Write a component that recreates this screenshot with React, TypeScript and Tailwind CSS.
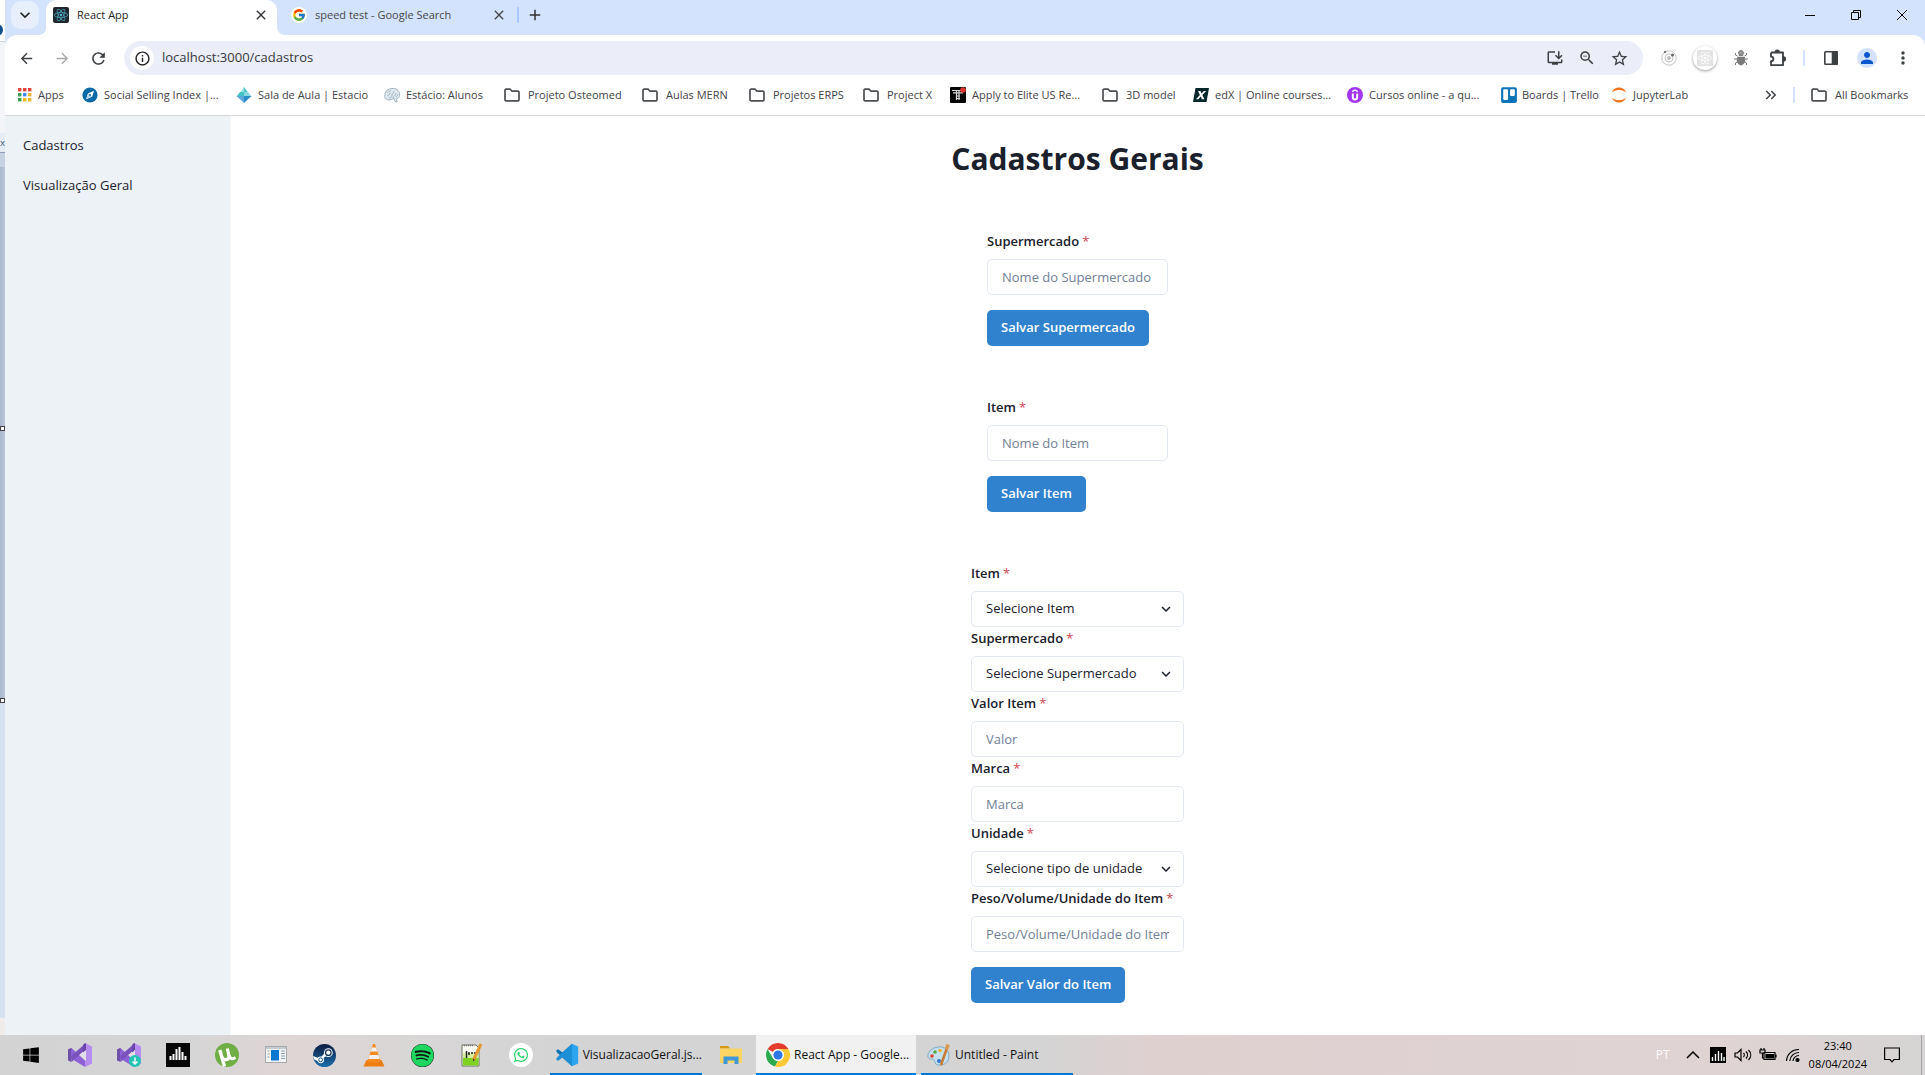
import React from "react";
import {
  MdArrowBack, MdArrowForward, MdRefresh, MdInfoOutline, MdStarBorder, MdZoomOut, MdOutlineInstallDesktop,
  MdMoreVert, MdKeyboardDoubleArrowRight, MdPerson, MdClose, MdAdd, MdKeyboardArrowDown,
} from "react-icons/md";
import { FcGoogle } from "react-icons/fc";
import { FaReact, FaWindows, FaSpotify, FaTrello, FaWhatsapp } from "react-icons/fa";

function FolderIcon() {
  return (
    <svg viewBox="0 0 16 14" className="h-3.5 w-4 shrink-0" fill="none" stroke="#4c4f52" strokeWidth="1.7" strokeLinejoin="round">
      <path d="M1 2.2a1 1 0 0 1 1-1h4.2l1.8 2h6a1 1 0 0 1 1 1v7.600a1 1 0 0 1-1 1H2a1 1 0 0 1-1-1z" />
    </svg>
  );
}

function AppsIcon() {
  const colors = ["#e0443a", "#e0443a", "#e0443a", "#34a04c", "#4285f4", "#f0b428", "#34a04c", "#f0b428", "#f0b428"];
  return (
    <svg viewBox="0 0 14 14" className="size-3.5 shrink-0">
      {colors.map((c, i) => (
        <rect key={i} x={(i % 3) * 5} y={Math.floor(i / 3) * 5} width="3.4" height="3.4" fill={c} />
      ))}
    </svg>
  );
}

function CompassIcon() {
  return (
    <svg viewBox="0 0 16 16" className="size-4 shrink-0">
      <circle cx="8" cy="8" r="7.600" fill="#0a6aa8" />
      <path d="M12 3.800 10.200 9.500 4.200 12.300 6 6.500z" fill="#fff" />
      <path d="M10.200 9.500 4.200 12.300 6 6.500z" fill="#b9d9ee" />
      <circle cx="8" cy="8" r="1" fill="#0a6aa8" />
    </svg>
  );
}

function DiamondIcon() {
  return (
    <svg viewBox="0 0 16 16" className="size-4 shrink-0">
      <path d="M8 0 4 5.500h4z" fill="#9be3e0" />
      <path d="M8 0l4 5.500H8z" fill="#4cc3cc" />
      <path d="M4 5h4v4.500H.5z" fill="#45c4c6" />
      <path d="M12 5H8v4.500h7.500z" fill="#8ad8e0" />
      <path d="M.5 9H8v7z" fill="#5ba9da" />
      <path d="M15.500 9H8v7z" fill="#2b8cc9" />
    </svg>
  );
}

function BrainIcon() {
  return (
    <svg viewBox="0 0 16 16" className="size-4 shrink-0" fill="none" stroke="#9fb4c4" strokeWidth="1">
      <path d="M5 13C1 13 0 10 1 7.500 1 4 4 2 8 1.500c4-.5 7 2 7.500 5 .5 3-1 5-3 5.500l.5 3-2-.5-1-3C8 12 7 13 5 13z" fill="#dfe9ef" />
      <path d="M3 9c1-1 3-1 3-3M5 11c2 0 3-1 3-3 0-2 2-2 2-4M9 11c0-2 3-2 3-5M3 6c1-1 2-2 4-2M12 10c1-1 2-2 2-3" />
    </svg>
  );
}

function TuringIcon() {
  return (
    <svg viewBox="0 0 16 16" className="size-4 shrink-0">
      <rect width="16" height="16" rx="1" fill="#050505" />
      <path d="M2 3.500h9M3 5.800h10M6.500 3v10M9 3v10M6 9h4M6 11.500h4" stroke="#d8d8d8" strokeWidth="1.200" />
      <circle cx="13" cy="3" r="2.800" fill="#e0342f" />
    </svg>
  );
}

function EdxIcon() {
  return (
    <svg viewBox="0 0 16 16" className="size-4 shrink-0">
      <path d="M2.500 1H16l-2.500 14H0z" fill="#03262b" />
      <path d="M5 4h2.500L8.500 6.500 10.800 4h2.400L9.400 8l2 4.200H8.900L7.800 9.500 5.300 12.200H2.900L6.900 8z" fill="#fff" />
    </svg>
  );
}

function UdemyIcon() {
  return (
    <svg viewBox="0 0 16 16" className="size-4 shrink-0" fill="none">
      <circle cx="8" cy="8" r="8" fill="#a435f0" />
      <path d="M5.200 4.600 8 3l2.800 1.600" stroke="#fff" strokeWidth="1.400" />
      <path d="M5.800 6.500v3.800a2.200 2.200 0 0 0 4.400 0V6.500" stroke="#fff" strokeWidth="1.900" />
    </svg>
  );
}

function JupyterIcon() {
  return (
    <svg viewBox="0 0 16 16" className="size-4 shrink-0" fill="#f37726">
      <path d="M.8 5.500C2 2.300 4.700.5 8 .5s6 1.800 7.200 5C13.500 3.700 11 2.900 8 2.900S2.500 3.700.8 5.500z" />
      <path d="M.8 10.500c1.200 3.200 3.900 5 7.200 5s6-1.800 7.200-5c-1.700 1.800-4.200 2.600-7.200 2.600s-5.500-.8-7.200-2.600z" />
    </svg>
  );
}

type Bookmark = { label: string; icon: React.ReactNode; width: string };

const bookmarks: Bookmark[] = [
  { label: "Apps", icon: <AppsIcon />, width: "w-[64px] gap-1.5" },
  { label: "Social Selling Index |...", icon: <CompassIcon />, width: "w-[154px] gap-1.5" },
  { label: "Sala de Aula | Estacio", icon: <DiamondIcon />, width: "w-[148px] gap-1.5" },
  { label: "Estácio: Alunos", icon: <BrainIcon />, width: "w-[120px] gap-1.5" },
  { label: "Projeto Osteomed", icon: <FolderIcon />, width: "w-[138px] gap-2" },
  { label: "Aulas MERN", icon: <FolderIcon />, width: "w-[107px] gap-2" },
  { label: "Projetos ERPS", icon: <FolderIcon />, width: "w-[114px] gap-2" },
  { label: "Project X", icon: <FolderIcon />, width: "w-[87px] gap-2" },
  { label: "Apply to Elite US Re...", icon: <TuringIcon />, width: "w-[152px] gap-1.5" },
  { label: "3D model", icon: <FolderIcon />, width: "w-[91px] gap-2" },
  { label: "edX | Online courses...", icon: <EdxIcon />, width: "w-[154px] gap-1.5" },
  { label: "Cursos online - a qu...", icon: <UdemyIcon />, width: "w-[153px] gap-1.5" },
  { label: "Boards | Trello", icon: <FaTrello className="size-[18px] shrink-0 text-[#0b74b8]" />, width: "w-[111px] gap-1" },
  { label: "JupyterLab", icon: <JupyterIcon />, width: "w-[90px] gap-1.5" },
];

function TabStrip() {
  return (
    <div className="flex h-[35px] items-start bg-[#d3e3fd] pl-1.5">
      <button aria-label="Search tabs" className="mt-px flex size-7 items-center justify-center rounded-[10px] bg-[#e8effc] text-[#1f2023]">
        <MdKeyboardArrowDown className="size-5" />
      </button>
      <div className="flex h-full">
        <div className="w-[7px] bg-white"><div className="h-full rounded-br-lg bg-[#d3e3fd]" /></div>
        <div className="flex h-full w-[231px] items-start rounded-t-[10px] bg-white pt-[7px] pr-2 pl-[7px]">
          <span className="flex size-4 items-center justify-center rounded-xs bg-[#20262e]">
            <FaReact className="size-3.5 text-[#4fb3cf]" />
          </span>
          <span className="ml-2 text-[11px] leading-4 text-[#1f1f1f]">React App</span>
          <button aria-label="Close tab" className="ml-auto text-[#303134]"><MdClose className="size-4" /></button>
        </div>
        <div className="w-2.5 bg-white"><div className="h-full rounded-bl-lg bg-[#d3e3fd]" /></div>
      </div>
      <div className="flex w-[230px] items-center gap-2 pt-[7px] pl-1">
        <span className="flex size-4 items-center justify-center rounded-full bg-white"><FcGoogle className="size-3.5" /></span>
        <span className="text-[11px] leading-4 whitespace-nowrap text-[#474747]">speed test - Google Search</span>
        <button aria-label="Close tab" className="mr-2.5 ml-auto text-[#474747]"><MdClose className="size-4" /></button>
      </div>
      <div className="mt-[7px] h-4 w-0.5 rounded bg-[#a8c7fa]" />
      <button aria-label="New tab" className="mt-1.5 ml-[7px] text-[#303134]"><MdAdd className="size-[18px]" /></button>
      <div className="ml-auto flex pt-[9px] pr-[17px] text-black">
        <button aria-label="Minimize" className="mr-[34px]">
          <svg viewBox="0 0 12 12" className="size-3" stroke="currentColor"><path d="M1 6.500h10" /></svg>
        </button>
        <button aria-label="Restore" className="mr-[34px]">
          <svg viewBox="0 0 12 12" className="size-3" fill="none" stroke="currentColor"><path d="M1.500 3.500h7v7h-7zM3.500 3.500v-2h7v7h-2" /></svg>
        </button>
        <button aria-label="Close">
          <svg viewBox="0 0 12 12" className="size-3" fill="none" stroke="currentColor"><path d="M1 1l10 10M11 1L1 11" /></svg>
        </button>
      </div>
    </div>
  );
}

function BugIcon() {
  return (
    <svg viewBox="0 0 16 16" className="size-4" fill="#7a7a7a" stroke="#7a7a7a">
      <path d="M4.500 6 2.500 5V3M11.500 6l2-1V3M4.500 9H1M11.500 9H15M4.500 12l-2 1v2M11.500 12l2 1v2" fill="none" />
      <ellipse cx="8" cy="10" rx="3.800" ry="5" />
      <circle cx="8" cy="3" r="2.400" fill="#9a9a9a" />
      <path d="M4.500 6.500h7" stroke="#dcdcdc" />
    </svg>
  );
}

function PuzzleIcon() {
  return (
    <svg viewBox="0 0 18 18" className="size-[18px]" fill="none" stroke="currentColor" strokeWidth="1.800" strokeLinejoin="round">
      <path d="M2 3.500h12v4.300M14 12v4.200H2v-4c3.200 0 3.200-4.500 0-4.500V3.500" />
      <path d="M6.500 3a1.700 1.700 0 0 1 3.400 0zM14.500 8.200a1.700 1.700 0 0 1 0 3.400z" fill="currentColor" />
      <path d="M14 7v6" />
    </svg>
  );
}

function Toolbar() {
  return (
    <div className="bg-[#d3e3fd]">
      <div className="flex h-[46px] items-center rounded-t-xl bg-white pr-3 pl-[13px] text-[#3c4043]">
        <button aria-label="Back"><MdArrowBack className="size-[17px]" /></button>
        <button aria-label="Forward" className="ml-[19px] text-[#a7a9ac]"><MdArrowForward className="size-[17px]" /></button>
        <button aria-label="Reload" className="ml-[18px]"><MdRefresh className="size-[19px]" /></button>
        <div className="ml-4 flex h-[34px] flex-1 items-center rounded-full bg-[#ebeef8] pr-3.5 pl-1.5">
          <span className="flex size-6 items-center justify-center rounded-full bg-white text-[#202124]"><MdInfoOutline className="size-[17px]" /></span>
          <input
            aria-label="Address"
            defaultValue="localhost:3000/cadastros"
            className="ml-2 flex-1 bg-transparent text-[13px] text-[#36383c] outline-none"
          />
          <button aria-label="Install app"><MdOutlineInstallDesktop className="size-[18px]" /></button>
          <button aria-label="Zoom" className="ml-3.5"><MdZoomOut className="size-[18px]" /></button>
          <button aria-label="Bookmark" className="ml-3.5"><MdStarBorder className="size-[19px]" /></button>
        </div>
        <button aria-label="Orbit extension" className="ml-[18px]">
          <svg viewBox="0 0 16 16" className="size-4" fill="none" stroke="#c4c4c4">
            <circle cx="8" cy="8" r="7.200" /><circle cx="8" cy="8" r="4" />
            <circle cx="8" cy="8" r="1.600" fill="#bbb" /><circle cx="4" cy="2" r="1.200" fill="#777" stroke="none" /><circle cx="11.500" cy="5" r="1.500" fill="#666" stroke="none" />
          </svg>
        </button>
        <button aria-label="React developer tools" className="ml-4 flex size-6 items-center justify-center rounded-full bg-white shadow-[0_1px_3px_rgba(0,0,0,0.4)]">
          <span className="flex size-4 items-center justify-center bg-[#e3e3e3] text-white"><FaReact className="size-3.5" /></span>
        </button>
        <button aria-label="Debugger" className="ml-4"><BugIcon /></button>
        <button aria-label="Extensions" className="ml-5"><PuzzleIcon /></button>
        <div className="ml-4 h-4 w-0.5 bg-[#d3e3fd]" />
        <button aria-label="Side panel" className="ml-[19px]">
          <svg viewBox="0 0 14 14" className="size-3.5" fill="none" stroke="currentColor" strokeWidth="1.600"><rect x=".8" y=".8" width="12.400" height="12.400" rx=".8" /><path d="M8.500 1h4.500v12H8.500z" fill="currentColor" /></svg>
        </button>
        <button aria-label="Profile" className="ml-[19px] flex size-5 items-center justify-center rounded-full bg-[#d3e3fd] text-[#0b57d0]"><MdPerson className="size-[18px]" /></button>
        <button aria-label="Menu" className="ml-4"><MdMoreVert className="size-5" /></button>
      </div>
    </div>
  );
}

function BookmarksBar() {
  return (
    <nav aria-label="Bookmarks" className="flex h-[35px] items-center overflow-hidden border-b border-[#dadce0] bg-white pr-3.5 pb-1.5 pl-[13px] text-[11px] text-[#3f4246]">
      {bookmarks.map((b) => (
        <a key={b.label} href="#" className={`flex shrink-0 items-center whitespace-nowrap ${b.width}`}>
          {b.icon}
          {b.label}
        </a>
      ))}
      <button aria-label="More bookmarks" className="ml-auto"><MdKeyboardDoubleArrowRight className="size-[18px]" /></button>
      <div className="ml-[13px] h-4 w-0.5 bg-[#d3e3fd]" />
      <a href="#" className="ml-4 flex w-[100px] items-center gap-2 whitespace-nowrap"><FolderIcon />All Bookmarks</a>
    </nav>
  );
}

const labelClass = "mb-[7px] flex gap-[3px] text-[13px] leading-[22px] font-semibold whitespace-nowrap text-[#1a202c]";
const boxClass =
  "block h-9 w-full rounded-[5px] border border-[#e2e8f0] bg-white px-3.5 text-[13px] text-[#1a202c] outline-none placeholder:text-[#718096]";

function FieldLabel({ id, label }: { id: string; label: string }) {
  return (
    <label htmlFor={id} className={labelClass}>
      {label}
      <span className="font-normal text-[#d0434f]">*</span>
    </label>
  );
}

function Field({ id, label, placeholder }: { id: string; label: string; placeholder: string }) {
  return (
    <div>
      <FieldLabel id={id} label={label} />
      <input id={id} placeholder={placeholder} className={boxClass} />
    </div>
  );
}

function SelectField({ id, label, placeholder }: { id: string; label: string; placeholder: string }) {
  return (
    <div>
      <FieldLabel id={id} label={label} />
      <div className="relative">
        <select id={id} className={`${boxClass} appearance-none`}>
          <option>{placeholder}</option>
        </select>
        <MdKeyboardArrowDown className="pointer-events-none absolute top-[9px] right-[9px] size-[18px] text-[#1a202c]" />
      </div>
    </div>
  );
}

function SubmitButton({ children }: { children: React.ReactNode }) {
  return (
    <button className="mt-[15px] h-9 rounded-[5px] bg-[#3182ce] px-3.5 text-[13px] font-semibold whitespace-nowrap text-white">{children}</button>
  );
}

function PageContent() {
  return (
    <div className="flex flex-1 bg-white">
      <aside className="w-[225px] bg-[#edf2f7] px-[18px] pt-[18px] text-[13px] leading-[22px] text-[#1a202c] shadow-[0_0_2px_rgba(0,0,0,0.1)]">
        <a href="#" className="block">Cadastros</a>
        <a href="#" className="mt-[18px] block">Visualização Geral</a>
      </aside>
      <main className="flex flex-1 flex-col items-center pt-6">
        <h1 className="text-[30px] leading-[38px] font-bold text-[#1a202c]">Cadastros Gerais</h1>
        <form className="mt-[52px] w-[181px]">
          <Field id="supermercado" label="Supermercado" placeholder="Nome do Supermercado" />
          <SubmitButton>Salvar Supermercado</SubmitButton>
        </form>
        <form className="mt-[50px] w-[181px]">
          <Field id="item" label="Item" placeholder="Nome do Item" />
          <SubmitButton>Salvar Item</SubmitButton>
        </form>
        <form className="mt-[50px] w-[213px]">
          <SelectField id="item-select" label="Item" placeholder="Selecione Item" />
          <SelectField id="supermercado-select" label="Supermercado" placeholder="Selecione Supermercado" />
          <Field id="valor" label="Valor Item" placeholder="Valor" />
          <Field id="marca" label="Marca" placeholder="Marca" />
          <SelectField id="unidade" label="Unidade" placeholder="Selecione tipo de unidade" />
          <Field id="peso" label="Peso/Volume/Unidade do Item" placeholder="Peso/Volume/Unidade do Item" />
          <SubmitButton>Salvar Valor do Item</SubmitButton>
        </form>
      </main>
    </div>
  );
}

function VisualStudioIcon({ installer = false }: { installer?: boolean }) {
  return (
    <svg viewBox="0 0 24 24" className="size-6">
      <path d="M0 6.500 3.500 5 17 17.500V24L3 15.500z" fill="#8d62d6" />
      <path d="M0 6.500v11L3.500 19V15l-.5-1V10l.5-5z" fill="#6f4fa8" />
      <path d="M3.500 19 18 6V0L3.500 12.500z" fill="#7a52bd" />
      <path d="M17 0l7 3.500v17L17 24z" fill="#b78cf0" />
      <path d="M18 6v12l-6.500-6z" fill="#e4dfe6" />
      <path d="M17 0l1 .5V7l-3 2.500V2z" fill="#6a45ad" />
      {installer && (
        <>
          <circle cx="18" cy="18" r="6" fill="#25c5b5" />
          <path d="M18 14.500v6M15.500 18.500 18 21l2.500-2.500" fill="none" stroke="#fff" strokeWidth="1.400" />
        </>
      )}
    </svg>
  );
}

function EqualizerIcon() {
  return (
    <svg viewBox="0 0 24 24" className="size-6">
      <rect width="24" height="24" fill="#070707" />
      <path d="M5 17v-4M8 17v-6M11 17V6M14 17V4M17 17V9M20 17v-4" transform="translate(-.5 0)" stroke="#fff" strokeWidth="2" />
    </svg>
  );
}

function TrayEqualizerIcon() {
  return (
    <svg viewBox="0 0 16 16" className="ml-2.5 size-4">
      <rect width="16" height="16" fill="#000" />
      <path d="M2.500 14v-4M5.500 14V7M8.500 14V4M11.500 14V6M14 14v-4" stroke="#fff" strokeWidth="1.400" />
    </svg>
  );
}

function UtorrentIcon() {
  return (
    <svg viewBox="0 0 24 24" className="size-6" fill="none" stroke="#fff" strokeLinecap="butt">
      <circle cx="12" cy="12" r="12" fill="#6fae45" stroke="none" />
      <path d="M4.800 7 9.500 23.500" strokeWidth="3.400" />
      <path d="M7 14c1.500 4 7.500 3.500 7-1L12.300 5.500" strokeWidth="3.200" />
      <path d="M14 12c.8 4 3.500 4.500 6.500 2.500" strokeWidth="3" />
    </svg>
  );
}

function WindowIcon() {
  return (
    <svg viewBox="0 0 22 18" className="h-[18px] w-[22px]">
      <rect x=".5" y=".5" width="21" height="16" fill="#f4f4f4" stroke="#a5a9ad" />
      <path d="M1 2h20" stroke="#c6cbd0" strokeWidth="2" />
      <rect x="6" y="4" width="8" height="10.500" fill="#0c77d3" />
      <path d="M2.500 5h2M2.500 8h2M2.500 11h2M16 5h4M16 7.500h4M16 10h4M16 12.500h4" stroke="#8aa0b5" />
    </svg>
  );
}

function SteamIcon() {
  return (
    <svg viewBox="0 0 24 24" className="size-[23px]">
      <defs>
        <linearGradient id="steam" x1="0" y1="0" x2="0" y2="1">
          <stop offset="0" stopColor="#0d1b3f" /><stop offset="1" stopColor="#1b6fae" />
        </linearGradient>
      </defs>
      <circle cx="12" cy="12" r="12" fill="url(#steam)" />
      <path d="M0 12.500 9 16l6.500-4.500-2.500-3L8 14l-1.500 4.500L1 16z" fill="#fff" />
      <circle cx="16" cy="9" r="4.600" fill="#fff" /><circle cx="16" cy="9" r="2.900" fill="none" stroke="#14305f" strokeWidth="1.300" />
      <circle cx="8" cy="16.500" r="3.500" fill="#fff" /><circle cx="8" cy="16.500" r="2" fill="none" stroke="#17508a" />
    </svg>
  );
}

function VlcIcon() {
  return (
    <svg viewBox="0 0 22 24" className="h-6 w-[22px]">
      <path d="M3.500 17h15l3 6.500H.5z" fill="#ef7d12" />
      <path d="M10 1h2l5.500 17c-2 2-11 2-13 0z" fill="#f58a1f" />
      <path d="M9 4.500h4l1.300 4H7.700zM6.600 12h8.800l1.300 4H5.300z" fill="#f1f1f1" />
    </svg>
  );
}

function NotepadIcon() {
  return (
    <svg viewBox="0 0 22 24" className="h-6 w-[22px]">
      <path d="M1 2h14l3 3v18H1z" fill="#f8faf2" stroke="#6a705f" />
      <path d="M2 14h15.500v8.500H2z" fill="#7ed321" />
      <path d="M2 10h15.500v5H2z" fill="#d4efa0" />
      <path d="M3 2.500h10" stroke="#777" strokeWidth="1.500" strokeDasharray="1 1" />
      <path d="M5.500 8v7M8 9v3M10 10h2M13 10h2" stroke="#222" strokeWidth="1.500" />
      <path d="M20 1 12.500 17" stroke="#e2992d" strokeWidth="3" />
      <path d="m12.500 15.500-.7 3 2-1.500" fill="#333" />
    </svg>
  );
}

function VsCodeIcon() {
  return (
    <svg viewBox="0 0 24 24" className="size-6">
      <path d="M17 0 6.800 9.300 2.300 5.900.5 6.800v2L17 24l1-6.500z" fill="#1173b8" />
      <path d="M17 24 6.800 14.700 2.300 18.100.5 17.200v-2L17 0l1 6.500z" fill="#1c8fd6" />
      <path d="M17 0l6.500 3v18L17 24z" fill="#2ca5ee" />
    </svg>
  );
}

function ExplorerIcon() {
  return (
    <svg viewBox="0 0 22 18" className="h-[18px] w-[22px]">
      <path d="M0 0h8l2 2.500H0z" fill="#d99a16" />
      <path d="M0 2.500h22V17H0z" fill="#fcd462" />
      <path d="M3.500 18v-7.500h15V18h-4v-3.500h-7V18z" fill="#3f97d8" />
    </svg>
  );
}

function ChromeIcon() {
  return (
    <svg viewBox="0 0 24 24" className="size-6">
      <circle cx="12" cy="12" r="12" fill="#fff" />
      <path d="M12 0a12 12 0 0 1 10.400 6H12a6 6 0 0 0-5.200 3L1.600 6A12 12 0 0 1 12 0z" fill="#e33b2e" />
      <path d="M1.600 6l5.200 9a6 6 0 0 0 5.200 3l-3 5.600A12 12 0 0 1 1.600 6z" fill="#2da94f" />
      <path d="M22.400 6A12 12 0 0 1 11 24l6.200-9a6 6 0 0 0 0-6L12 6z" fill="#fcc934" />
      <path d="M12 18l-3 5.600 2.500.4 5.700-9a6 6 0 0 1-5.200 3z" fill="#fcc934" />
      <circle cx="12" cy="12" r="5.800" fill="#fff" />
      <circle cx="12" cy="12" r="4.600" fill="#2f77e8" />
    </svg>
  );
}

function PaintIcon() {
  return (
    <svg viewBox="0 0 24 24" className="size-6">
      <path d="M11 4C4 5 0 10 1 14c1 3 4 1 6 3s0 4 4 5c6 1 11-3 11-9S17 3 11 4z" fill="#c5dfef" stroke="#7fa8c2" />
      <circle cx="5" cy="13" r="1.800" fill="#d9442f" /><circle cx="8" cy="9" r="1.800" fill="#56a83c" />
      <circle cx="13" cy="7.500" r="1.800" fill="#eab42a" /><circle cx="12" cy="18" r="2" fill="#3576c8" />
      <path d="M21 2 14 22" stroke="#c77b32" strokeWidth="2.500" /><path d="m19 1 4 1-2 5-3-1z" fill="#d89b55" />
    </svg>
  );
}

const taskClass = "flex items-center gap-1 border-y-2 border-t-transparent border-b-[#0078d4] whitespace-nowrap";

function Taskbar() {
  const pinned: [string, React.ReactNode][] = [
    ["Start", <FaWindows className="size-[18px] text-black" />],
    ["Visual Studio", <VisualStudioIcon />],
    ["Visual Studio Installer", <VisualStudioIcon installer />],
    ["Equalizer", <EqualizerIcon />],
    ["Torrent", <UtorrentIcon />],
    ["Window manager", <WindowIcon />],
    ["Steam", <SteamIcon />],
    ["VLC", <VlcIcon />],
    ["Spotify", <span className="rounded-full bg-[#111]"><FaSpotify className="size-[23px] text-[#1ed760]" /></span>],
    ["Notepad++", <NotepadIcon />],
    ["WhatsApp", <span className="flex size-6 items-center justify-center rounded-full bg-white"><FaWhatsapp className="size-4 text-[#25d366]" /></span>],
  ];
  return (
    <footer className="flex h-10 bg-[linear-gradient(90deg,#d3d3d3_0%,#d6d5d5_10%,#dfd5d5_15%,#d8d6d6_22%,#d4d4d4_30%,#d4d4d4_54%,#dfd0d0_60%,#dfd3d3_90%,#d6d4d4_100%)] pl-1.5 text-[12px] text-[#111]">
      {pinned.map(([name, icon]) => (
        <button key={name} aria-label={name} className="flex w-[49px] items-center justify-center">{icon}</button>
      ))}
      <button className={`${taskClass} ml-[5px] w-[152px] pl-1.5`}><VsCodeIcon />VisualizacaoGeral.js...</button>
      <button aria-label="File Explorer" className="flex w-[54px] items-center justify-center pl-1"><ExplorerIcon /></button>
      <button className={`${taskClass} w-40 bg-[#f1f1f1] pl-2.5`}><ChromeIcon />React App - Google...</button>
      <button className={`${taskClass} ml-[5px] w-[152px] pl-1.5`}><PaintIcon />Untitled - Paint</button>
      <div className="ml-auto flex items-center text-black">
        <span className="text-[12px] text-white">PT</span>
        <button aria-label="Hidden icons" className="ml-4">
          <svg viewBox="0 0 14 8" className="h-2 w-3.5" fill="none" stroke="currentColor" strokeWidth="1.500"><path d="M1 7l6-6 6 6" /></svg>
        </button>
        <TrayEqualizerIcon />
        <svg viewBox="0 0 18 16" className="ml-2 h-4 w-[18px]" fill="none" stroke="currentColor" strokeWidth="1.200">
          <path d="M1 6h2.500L7 2.500v11L3.500 10H1zM9.500 6c1 1 1 3 0 4M12 4.500c2 2 2 5 0 7M14.500 3c3 3 3 7 0 10" />
        </svg>
        <svg viewBox="0 0 18 14" className="ml-[7px] h-3.5 w-[18px]" fill="none" stroke="currentColor" strokeWidth="1.200">
          <path d="M5 4.500h11v7H5zM17 6.500v3" /><path d="M7 6.500h7.500v3.500H7z" fill="currentColor" />
          <path d="M1 2h5v3H1zM2 0v2M5 0v2M3.500 5v5H5" />
        </svg>
        <svg viewBox="0 0 16 16" className="ml-2 size-4" fill="none" stroke="currentColor" strokeWidth="1.200">
          <path d="M1.500 14A12 12 0 0 1 14 2.500M4.800 14A9 9 0 0 1 14 5.500M8 14a6 6 0 0 1 6-5.500" /><circle cx="12.500" cy="13" r="1.500" fill="currentColor" />
        </svg>
        <div className="ml-2 text-center text-[11px] leading-[18px]">
          <div>23:40</div>
          <div>08/04/2024</div>
        </div>
        <button aria-label="Notifications" className="mr-[21px] ml-[17px]">
          <svg viewBox="0 0 16 16" className="size-4" fill="none" stroke="currentColor" strokeWidth="1.200"><path d="M.6 1h14.800v11.500H10L8 14.800 6 12.500H.6z" /></svg>
        </button>
        <div className="mr-[3px] h-10 w-px bg-[#a5a5a5]" />
      </div>
    </footer>
  );
}

function BackgroundEdge() {
  return (
    <div className="relative flex w-[5px] flex-col overflow-hidden bg-[#d5e0f0]">
      <div className="h-[41px] bg-white" />
      <div className="h-[92px] border-t border-[#d0d3d8] bg-[#f3f5f9]" />
      <div className="flex h-5 items-center justify-center border-b border-[#8d9cb8] bg-[#e6ecf6] text-[8px] text-[#203864]">X</div>
      <div className="h-[14px] bg-[#c6d1e2]" />
      <div className="h-[536px] bg-[linear-gradient(90deg,#a9b8d0,#b9c4d6)]" />
      <div className="mt-auto h-[17px] bg-[#f0ece9]" />
      <div className="absolute top-6 -left-[9px] size-3 rounded-full bg-[#0f4f8f]" />
      <div className="absolute top-[426px] left-0 size-[5px] border border-[#444] bg-white" />
      <div className="absolute top-[698px] left-0 size-[5px] border border-[#444] bg-white" />
    </div>
  );
}

export default function App() {
  return (
    <div className="flex min-h-screen flex-col bg-white font-['Open_Sans','Noto_Sans',sans-serif]">
      <div className="flex flex-1">
        <BackgroundEdge />
        <div className="flex min-w-0 flex-1 flex-col">
          <TabStrip />
          <Toolbar />
          <BookmarksBar />
          <PageContent />
        </div>
      </div>
      <Taskbar />
    </div>
  );
}
